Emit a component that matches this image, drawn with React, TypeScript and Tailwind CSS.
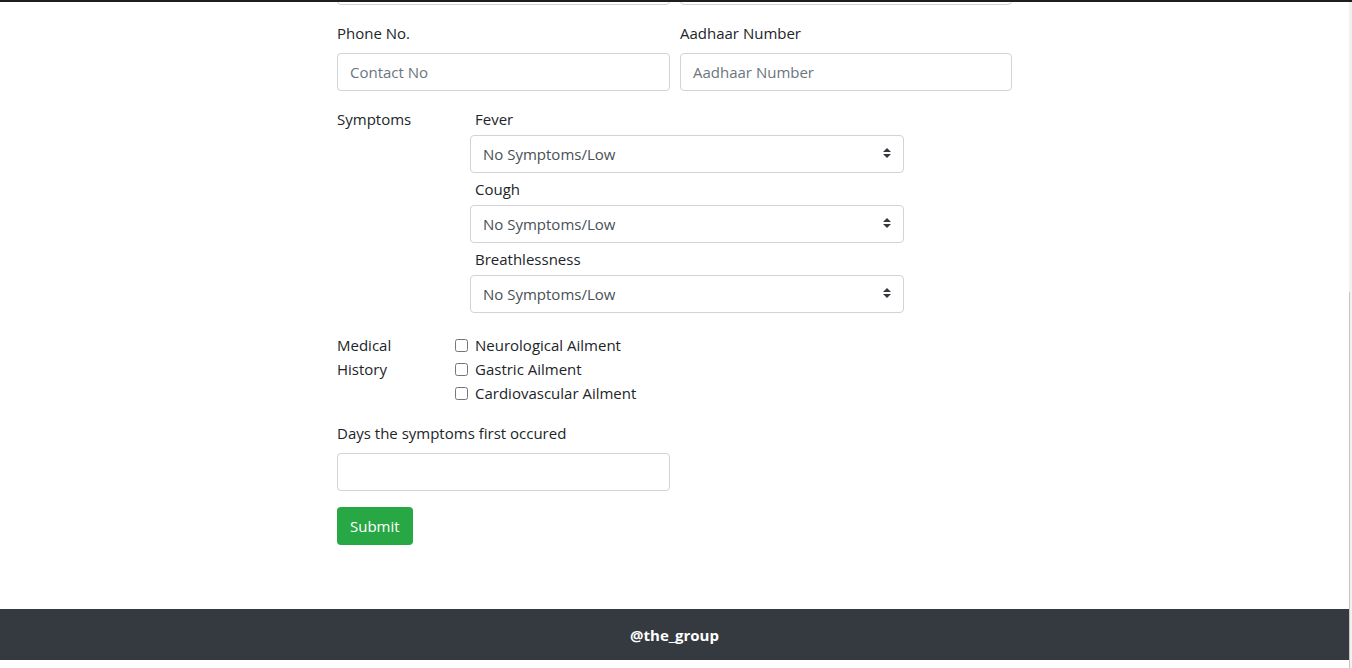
import { useState } from "react";

const severityOptions = ["No Symptoms/Low", "Mild", "Moderate", "Severe"];

const symptomFields = ["Fever", "Cough", "Breathlessness"];

const historyFields = ["Neurological Ailment", "Gastric Ailment", "Cardiovascular Ailment"];

function SeveritySelect({ value, onChange }: { value: string; onChange: (v: string) => void }) {
  return (
    <div className="relative mb-1 h-[38px] w-full">
      <select
        value={value}
        onChange={(e) => onChange(e.target.value)}
        className="h-[38px] w-full appearance-none rounded border border-[#ced4da] bg-white pl-3 pr-8 text-[#495057] outline-none"
      >
        {severityOptions.map((opt) => (
          <option key={opt} value={opt}>
            {opt}
          </option>
        ))}
      </select>
      <svg
        className="pointer-events-none absolute right-[13px] top-[13px] h-[10px] w-[8px]"
        viewBox="0 0 4 5"
      >
        <path fill="#343a40" d="M2 0L0 2h4zm0 5L0 3h4z" />
      </svg>
    </div>
  );
}

export default function App() {
  const [severity, setSeverity] = useState<Record<string, string>>({
    Fever: severityOptions[0],
    Cough: severityOptions[0],
    Breathlessness: severityOptions[0],
  });
  const [history, setHistory] = useState<Record<string, boolean>>({});

  return (
    <div
      className="flex h-[668px] flex-col overflow-hidden bg-white text-[15px] text-[#212529]"
      style={{ fontFamily: '"Open Sans", "Noto Sans", sans-serif' }}
    >
      <div className="h-[2px] shrink-0 bg-[#1e1e1e]" />
      <div className="flex flex-1">
        <div className="flex flex-1 flex-col">
          <main className="mx-auto w-[675px]">
            {/* previous row, scrolled off the top */}
            <div className="mb-4 flex h-[3px] items-end gap-[10px] overflow-hidden">
              <div className="h-[38px] w-[333px] shrink-0 rounded border border-[#ced4da]" />
              <div className="h-[38px] w-[332px] shrink-0 rounded border border-[#ced4da]" />
            </div>

            <div className="flex gap-[10px]">
              <div className="w-[333px]">
                <label className="mb-2 block leading-6">Phone No.</label>
                <input
                  type="text"
                  placeholder="Contact No"
                  className="h-[38px] w-full rounded border border-[#ced4da] px-3 text-[#495057] outline-none placeholder:text-[#6c757d]"
                />
              </div>
              <div className="w-[332px]">
                <label className="mb-2 block leading-6">Aadhaar Number</label>
                <input
                  type="text"
                  placeholder="Aadhaar Number"
                  className="h-[38px] w-full rounded border border-[#ced4da] px-3 text-[#495057] outline-none placeholder:text-[#6c757d]"
                />
              </div>
            </div>

            <div className="mt-4 flex">
              <div className="w-[133px] leading-6">Symptoms</div>
              <div className="w-[434px]">
                {symptomFields.map((field) => (
                  <div key={field}>
                    <label className="mb-1 block pl-[5px] leading-6">{field}</label>
                    <SeveritySelect
                      value={severity[field]}
                      onChange={(v) => setSeverity((cur) => ({ ...cur, [field]: v }))}
                    />
                  </div>
                ))}
              </div>
            </div>

            <div className="mt-4 flex">
              <div className="w-[118px] leading-6">
                Medical
                <br />
                History
              </div>
              <div className="flex flex-col">
                {historyFields.map((field) => (
                  <label key={field} className="flex h-6 items-center leading-6">
                    <input
                      type="checkbox"
                      checked={!!history[field]}
                      onChange={(e) => setHistory((cur) => ({ ...cur, [field]: e.target.checked }))}
                      className="m-0 mr-[7px] h-[13px] w-[13px]"
                    />
                    {field}
                  </label>
                ))}
              </div>
            </div>

            <div className="mt-4">
              <label className="mb-2 block leading-6">Days the symptoms first occured</label>
              <input
                type="number"
                className="h-[38px] w-[333px] rounded border border-[#ced4da] px-3 text-[#495057] outline-none"
              />
            </div>

            <button
              type="button"
              className="mt-4 h-[38px] rounded bg-[#28a745] px-[13px] leading-6 text-white"
            >
              Submit
            </button>
          </main>

          <footer className="mt-[64px] flex h-[51px] shrink-0 items-center justify-center bg-[#343a40] pt-px font-bold text-white">
            @the_group
          </footer>
        </div>

        {/* scrollbar strip */}
        <div className="flex w-[3px] flex-col bg-[#f1f1f1]">
          <div className="mt-[290px] flex-1 border-l border-[#c6c6c6]" />
        </div>
      </div>
    </div>
  );
}
